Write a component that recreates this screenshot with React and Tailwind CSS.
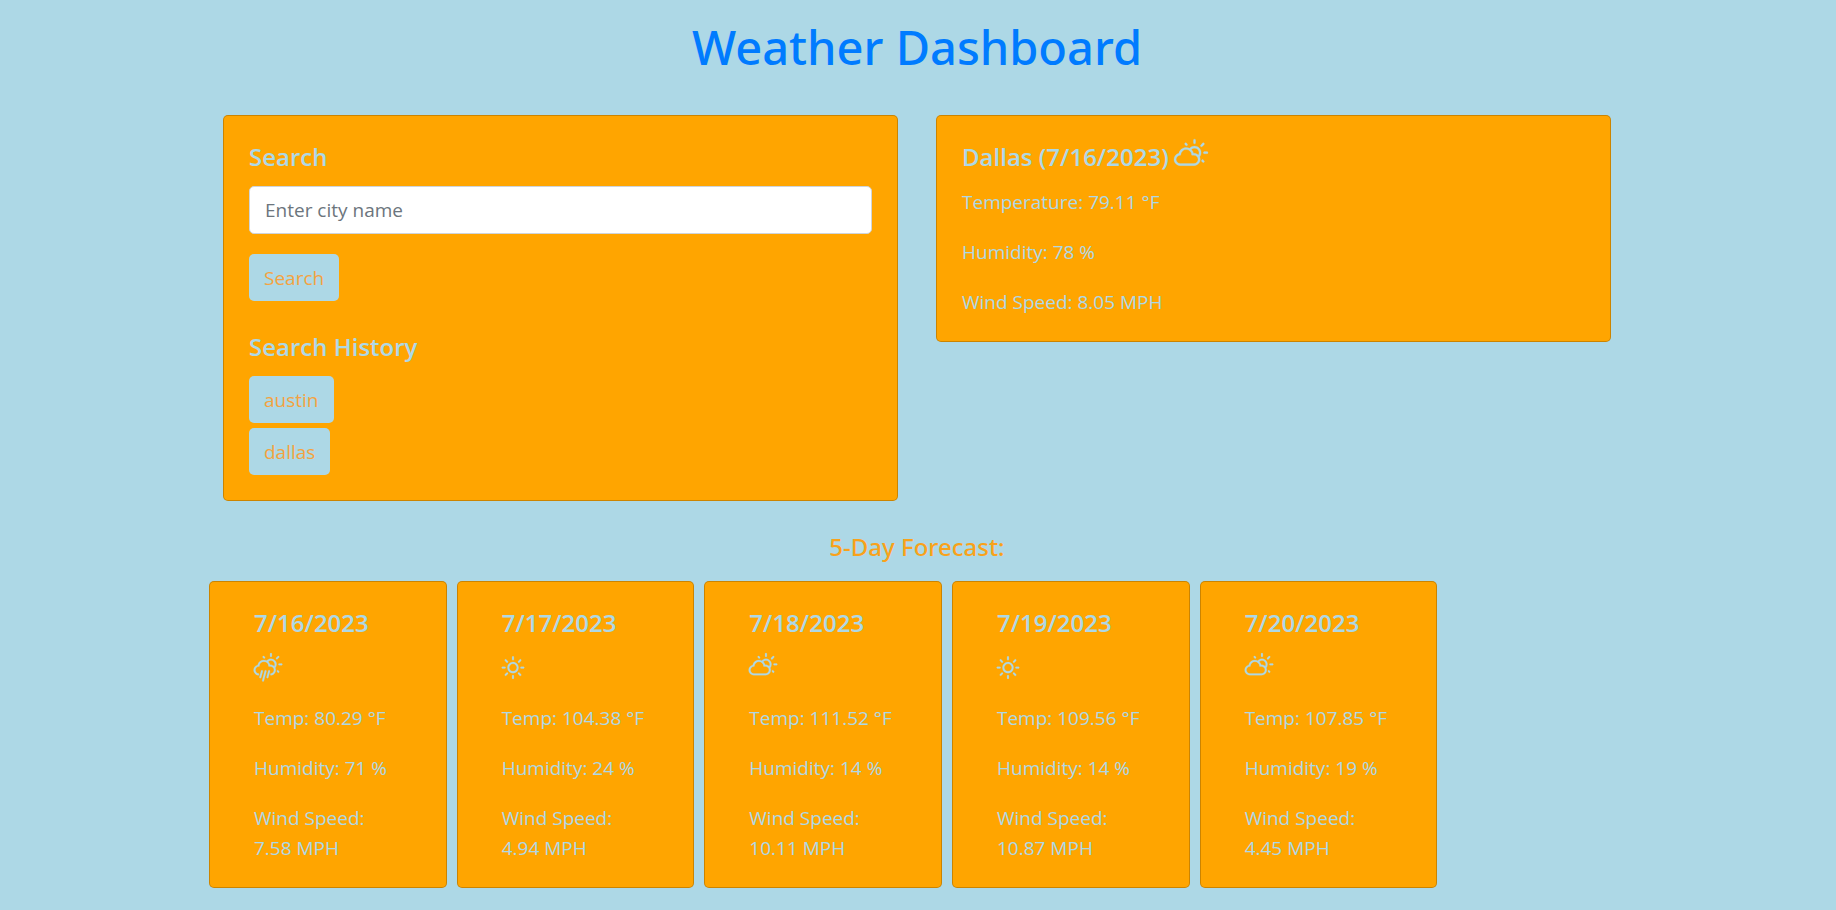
import { WiDayCloudy, WiDayRain, WiDaySunny } from "react-icons/wi";

const forecast = [
  { date: "7/16/2023", Icon: WiDayRain, inset: "-ml-0.5", temp: "80.29", humidity: 71, wind: "7.58" },
  { date: "7/17/2023", Icon: WiDaySunny, inset: "-ml-[5px]", temp: "104.38", humidity: 24, wind: "4.94" },
  { date: "7/18/2023", Icon: WiDayCloudy, inset: "-ml-0.5", temp: "111.52", humidity: 14, wind: "10.11" },
  { date: "7/19/2023", Icon: WiDaySunny, inset: "-ml-[5px]", temp: "109.56", humidity: 14, wind: "10.87" },
  { date: "7/20/2023", Icon: WiDayCloudy, inset: "-ml-0.5", temp: "107.85", humidity: 19, wind: "4.45" },
];

const history = ["austin", "dallas"];

const card = "rounded-[5px] border border-black/20 bg-[#ffa500] bg-clip-border";
const heading = "text-[24px] leading-[30px] font-semibold";
const button =
  "h-[47px] cursor-pointer rounded-[5px] bg-[#add8e6] px-[15px] text-[19px] leading-[30px] text-[#f4a341]";

export default function App() {
  return (
    <div className="min-h-screen bg-[#add8e6] pr-0.5 pb-[22px] font-['Open_Sans','Noto_Sans',sans-serif] text-[19px] leading-[30px] text-[#add8e6]">
      <h1 className="pt-[17px] text-center font-['Noto_Sans',sans-serif] text-[47px] leading-[60px] font-medium text-[#007bff]">
        Weather Dashboard
      </h1>

      <main className="mx-auto max-w-[1426px]">
        <div className="mt-[38px] grid grid-cols-2 items-start gap-[38px] px-[19px]">
          <section className={`${card} px-[25px] pt-[26px] pb-[25px]`}>
            <form onSubmit={(e) => e.preventDefault()}>
              <h2 className={heading}>
                <label htmlFor="city">Search</label>
              </h2>
              <input
                id="city"
                type="text"
                placeholder="Enter city name"
                className="mt-[14px] block h-12 w-full rounded-[5px] border border-[#ced4da] bg-white px-[15px] text-[#495057] placeholder:text-[#6c757d]"
              />
              <button type="submit" className={`${button} mt-5`}>
                Search
              </button>
            </form>
            <h2 className={`${heading} mt-[31px]`}>Search History</h2>
            <ul className="mt-[14px] flex flex-col items-start gap-[5px]">
              {history.map((city) => (
                <li key={city} className="flex">
                  <button type="button" className={button}>
                    {city}
                  </button>
                </li>
              ))}
            </ul>
          </section>

          <section className={`${card} px-[25px] pt-[26px] pb-6`}>
            <h2 className={`${heading} flex h-[30px] items-center gap-[3px]`}>
              Dallas (7/16/2023)
              <WiDayCloudy className="size-[38px]" strokeWidth="0.2" aria-hidden="true" />
            </h2>
            <div className="mt-[15px] flex flex-col gap-5">
              <p>Temperature: 79.11 °F</p>
              <p>Humidity: 78 %</p>
              <p>Wind Speed: 8.05 MPH</p>
            </div>
          </section>
        </div>

        <h2 className="mt-[31px] text-center font-['Noto_Sans',sans-serif] text-[24px] leading-[30px] font-medium text-[#f9a21b]">
          5-Day Forecast:
        </h2>
        <div className="mt-[19px] flex">
          {forecast.map(({ date, Icon, inset, temp, humidity, wind }) => (
            <article key={date} className={`${card} mx-[5px] w-1/6 pt-[26px] pr-10 pb-6 pl-11`}>
              <h3 className={heading}>{date}</h3>
              <div className="mt-[15px] flex h-[30px] items-center">
                <Icon className={`size-8 ${inset}`} strokeWidth="0.2" aria-hidden="true" />
              </div>
              <div className="mt-5 flex flex-col gap-5">
                <p>Temp: {temp} °F</p>
                <p>Humidity: {humidity} %</p>
                <p>Wind Speed: {wind} MPH</p>
              </div>
            </article>
          ))}
        </div>
      </main>
    </div>
  );
}
